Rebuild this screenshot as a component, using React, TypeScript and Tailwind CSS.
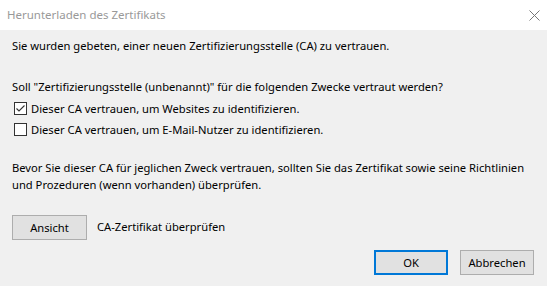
import React from 'react'

function Checkbox({ checked }: { checked?: boolean }) {
  return (
    <span className="w-[13px] h-[13px] border border-[#333333] bg-white flex items-center justify-center shrink-0">
      {checked && (
        <svg width="11" height="11" viewBox="0 0 11 11">
          <path d="M1.5 5.5 L4 8 L9.5 2.5" fill="none" stroke="#333333" strokeWidth="1.1" />
        </svg>
      )}
    </span>
  )
}

export default function App() {
  return (
    <div
      className="w-[547px] h-[286px] flex flex-col bg-[#f0f0f0] text-[11.2px] text-black overflow-hidden"
      style={{ fontFamily: '"Noto Sans", "Liberation Sans", sans-serif' }}
    >
      <div className="h-[30px] bg-white flex items-center justify-between pl-[7px] pr-[7px] shrink-0">
        <span className="text-[#999999] text-[11.5px]">Herunterladen des Zertifikats</span>
        <svg width="11" height="11" viewBox="0 0 11 11">
          <path d="M0.5 0.5 L10.5 10.5 M10.5 0.5 L0.5 10.5" stroke="#777777" strokeWidth="1" />
        </svg>
      </div>
      <div className="flex-1 flex flex-col px-[12px]">
        <p className="leading-[16px] mt-[8px]">
          Sie wurden gebeten, einer neuen Zertifizierungsstelle (CA) zu vertrauen.
        </p>
        <p className="leading-[16px] mt-[25px]">
          Soll "Zertifizierungsstelle (unbenannt)" für die folgenden Zwecke vertraut werden?
        </p>
        <div className="flex flex-col gap-[8px] mt-[7px] pl-[2px]">
          <label className="flex items-center gap-[4px] leading-[13px] h-[13px]">
            <Checkbox checked />
            <span>Dieser CA vertrauen, um Websites zu identifizieren.</span>
          </label>
          <label className="flex items-center gap-[4px] leading-[13px] h-[13px]">
            <Checkbox />
            <span>Dieser CA vertrauen, um E-Mail-Nutzer zu identifizieren.</span>
          </label>
        </div>
        <p className="leading-[17px] mt-[23px] pr-[10px]">
          Bevor Sie dieser CA für jeglichen Zweck vertrauen, sollten Sie das Zertifikat sowie seine Richtlinien und Prozeduren (wenn vorhanden) überprüfen.
        </p>
        <div className="flex items-center mt-[22px] gap-[10px]">
          <button className="w-[75px] h-[25px] bg-[#e1e1e1] border border-[#adadad] leading-none">
            Ansicht
          </button>
          <span>CA-Zertifikat überprüfen</span>
        </div>
        <div className="flex justify-end gap-[12px] mt-[10px] pr-[1px]">
          <button className="w-[74px] h-[25px] bg-[#e1e1e1] border-2 border-[#0078d7] leading-none">
            OK
          </button>
          <button className="w-[74px] h-[25px] bg-[#e1e1e1] border border-[#adadad] leading-none">
            Abbrechen
          </button>
        </div>
      </div>
    </div>
  )
}
